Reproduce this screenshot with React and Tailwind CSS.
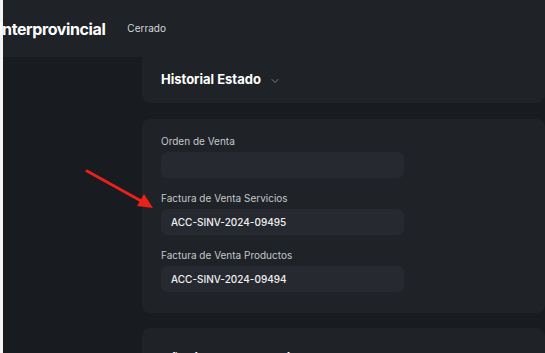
import { ChevronDown } from "lucide-react";

const fields = [
  { label: "Orden de Venta", value: "" },
  { label: "Factura de Venta Servicios", value: "ACC-SINV-2024-09495" },
  { label: "Factura de Venta Productos", value: "ACC-SINV-2024-09494" },
];

const Field = ({ label, value }) => (
  <div className="flex flex-col">
    <label className="text-[10px] leading-[12px] text-[#c4c8cd]">{label}</label>
    <div className="mt-[5px] h-[26px] w-[243px] rounded-md bg-[#262a30] px-[10px] flex items-center text-[10px] font-medium text-[#f0f1f2]">
      {value}
    </div>
  </div>
);

export default function App() {
  return (
    <div
      className="relative flex w-[545px] h-[353px] overflow-hidden bg-[#181b1f]"
      style={{ fontFamily: "Inter, 'Noto Sans', sans-serif" }}
    >
      <div className="w-[3px] shrink-0 bg-[#f3f3f4]" />
      <div className="flex flex-1 flex-col">
        <header className="h-[57px] shrink-0 bg-[#1f2226] flex items-center">
          <h1 className="ml-[-5px] text-[16px] font-bold text-white tracking-[-0.4px]">Interprovincial</h1>
          <span className="ml-[22px] text-[10px] text-[#d6d8db]">Cerrado</span>
        </header>
        <div className="flex flex-1">
          <aside className="w-[139px] shrink-0" />
          <main className="flex flex-1 flex-col">
            <section className="h-[46px] rounded-b-lg bg-[#1f2226] pl-[19px] flex items-center">
              <h2 className="text-[13px] font-bold text-white">Historial Estado</h2>
              <ChevronDown className="ml-[8px] mt-[2px] h-[12px] w-[12px] text-[#9a9ea4]" strokeWidth={1.5} />
            </section>
            <section className="mt-4 rounded-lg bg-[#1f2226] pl-[19px] pt-[16px] pb-[21px] flex flex-col gap-[14px]">
              {fields.map((f) => (
                <Field key={f.label} label={f.label} value={f.value} />
              ))}
            </section>
            <section className="mt-[15px] h-[60px] rounded-lg bg-[#1f2226] pl-[19px] pt-[21px]">
              <h2 className="text-[13px] font-bold text-white">Añadir un comentario</h2>
            </section>
          </main>
        </div>
      </div>
      <svg className="absolute left-0 top-0" width="545" height="353" viewBox="0 0 545 353">
        <line x1="87" y1="171" x2="143" y2="202" stroke="#e8211c" strokeWidth="3" strokeLinecap="round" />
        <polygon points="153,208 137,206 144,194" fill="#e8211c" />
      </svg>
    </div>
  );
}
